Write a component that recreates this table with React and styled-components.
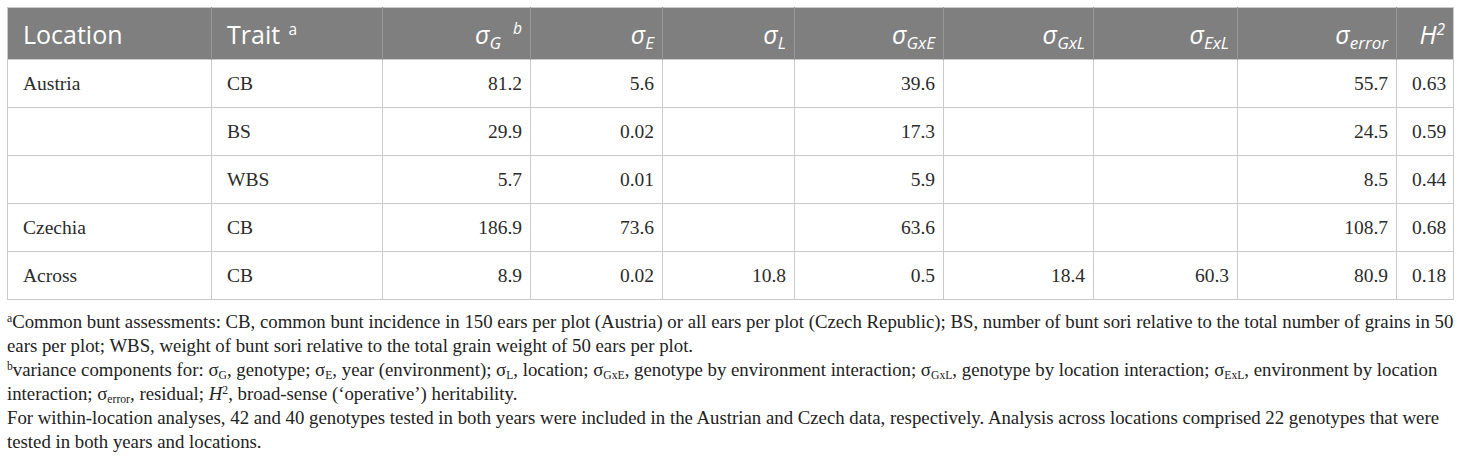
import React from 'react';
import styled, { createGlobalStyle } from 'styled-components';

const GlobalStyle = createGlobalStyle`
  html, body {
    margin: 0;
    padding: 0;
    background: #fff;
  }
`;

const Page = styled.div`
  padding: 7px 7px 0 7px;
  width: 1446px;
`;

const Table = styled.table`
  width: 1446px;
  table-layout: fixed;
  border-collapse: collapse;
  border: 1px solid #cbcbcb;
`;

const HeadCell = styled.th`
  height: 51px;
  padding: 0 ${p => (p.$right ? '8px' : '15px')} 0 15px;
  background: #7f7f7f;
  color: #fff;
  font-family: "Open Sans", "Noto Sans", sans-serif;
  font-size: 25px;
  font-weight: 400;
  text-align: ${p => (p.$right ? 'right' : 'left')};
  border-left: 1px solid #979797;
  white-space: nowrap;
  &:first-child {
    border-left: none;
  }
`;

const Cell = styled.td`
  height: 47px;
  padding: 0 ${p => (p.$right ? '8px' : '15px')} 0 15px;
  border: 1px solid #cbcbcb;
  color: #2b2b2b;
  font-family: "Liberation Serif", "Times New Roman", serif;
  font-size: 19.5px;
  text-align: ${p => (p.$right ? 'right' : 'left')};
  white-space: nowrap;
`;

const Sym = styled.span`
  font-style: italic;
`;

const Sub = styled.sub`
  font-size: 0.68em;
  vertical-align: -0.3em;
  line-height: 0;
`;

const Sup = styled.sup`
  font-size: 0.62em;
  vertical-align: ${p => p.$hi || '0.55em'};
  line-height: 0;
  margin-left: ${p => p.$gap || '0'};
`;

const Notes = styled.div`
  margin-top: 10px;
  color: #222;
  font-family: "Liberation Serif", "Times New Roman", serif;
  font-size: 18.8px;
  line-height: 24px;
`;

const Line = styled.div`
  white-space: nowrap;
`;

const NoteSub = styled.sub`
  font-size: 0.62em;
  vertical-align: -0.25em;
  line-height: 0;
`;

const NoteSup = styled.sup`
  font-size: 0.62em;
  vertical-align: 0.5em;
  line-height: 0;
`;

const sigma = (sub, sup) => (
  <>
    <Sym>σ<Sub>{sub}</Sub></Sym>
    {sup && <Sup $gap="12px" $hi="0.6em"><Sym>{sup}</Sym></Sup>}
  </>
);

const cols = [204, 171, 148, 132, 132, 149, 150, 144, 159, 57];

const rows = [
  ['Austria', 'CB', '81.2', '5.6', '', '39.6', '', '', '55.7', '0.63'],
  ['', 'BS', '29.9', '0.02', '', '17.3', '', '', '24.5', '0.59'],
  ['', 'WBS', '5.7', '0.01', '', '5.9', '', '', '8.5', '0.44'],
  ['Czechia', 'CB', '186.9', '73.6', '', '63.6', '', '', '108.7', '0.68'],
  ['Across', 'CB', '8.9', '0.02', '10.8', '0.5', '18.4', '60.3', '80.9', '0.18'],
];

const ns = t => <NoteSub>{t}</NoteSub>;

export default function App() {
  return (
    <Page>
      <GlobalStyle />
      <Table>
        <colgroup>
          {cols.map((w, i) => <col key={i} style={{ width: w }} />)}
        </colgroup>
        <thead>
          <tr>
            <HeadCell>Location</HeadCell>
            <HeadCell>Trait <Sup $gap="2px">a</Sup></HeadCell>
            <HeadCell $right>{sigma('G', 'b')}</HeadCell>
            <HeadCell $right>{sigma('E')}</HeadCell>
            <HeadCell $right>{sigma('L')}</HeadCell>
            <HeadCell $right>{sigma('GxE')}</HeadCell>
            <HeadCell $right>{sigma('GxL')}</HeadCell>
            <HeadCell $right>{sigma('ExL')}</HeadCell>
            <HeadCell $right>{sigma('error')}</HeadCell>
            <HeadCell $right><Sym>H<Sup>2</Sup></Sym></HeadCell>
          </tr>
        </thead>
        <tbody>
          {rows.map((r, i) => (
            <tr key={i}>
              {r.map((v, j) => (
                <Cell key={j} $right={j > 1}>{v}</Cell>
              ))}
            </tr>
          ))}
        </tbody>
      </Table>
      <Notes>
        <Line><NoteSup>a</NoteSup>Common bunt assessments: CB, common bunt incidence in 150 ears per plot (Austria) or all ears per plot (Czech Republic); BS, number of bunt sori relative to the total number of grains in 50</Line>
        <Line>ears per plot; WBS, weight of bunt sori relative to the total grain weight of 50 ears per plot.</Line>
        <Line><NoteSup>b</NoteSup>variance components for: σ{ns('G')}, genotype; σ{ns('E')}, year (environment); σ{ns('L')}, location; σ{ns('GxE')}, genotype by environment interaction; σ{ns('GxL')}, genotype by location interaction; σ{ns('ExL')}, environment by location</Line>
        <Line>interaction; σ{ns('error')}, residual; <i>H</i><NoteSup>2</NoteSup>, broad-sense (‘operative’) heritability.</Line>
        <Line>For within-location analyses, 42 and 40 genotypes tested in both years were included in the Austrian and Czech data, respectively. Analysis across locations comprised 22 genotypes that were</Line>
        <Line>tested in both years and locations.</Line>
      </Notes>
    </Page>
  );
}
